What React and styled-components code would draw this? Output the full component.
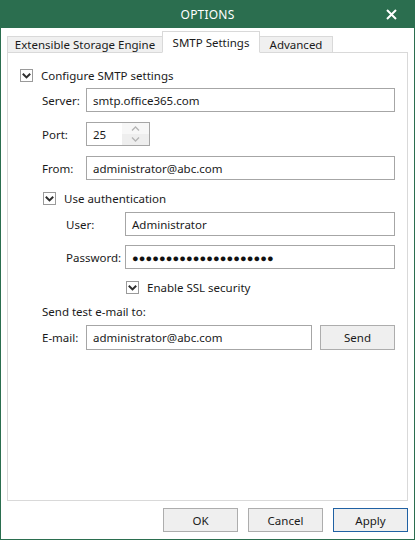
import React from 'react';
import styled, { createGlobalStyle } from 'styled-components';

const GlobalStyle = createGlobalStyle`
  html, body {
    margin: 0;
    padding: 0;
    background: #ffffff;
  }
  body {
    font-family: "Noto Sans", "Open Sans", sans-serif;
    font-size: 11.5px;
    color: #1a1a1a;
  }
`;

const green = '#2b6e4f';

const Window = styled.div`
  width: 415px;
  height: 540px;
  box-sizing: border-box;
  border: 1px solid ${green};
  border-top: none;
  display: flex;
  flex-direction: column;
  background: #ffffff;
`;

const TitleBar = styled.div`
  height: 28px;
  flex: none;
  margin: 0 -1px;
  background: ${green};
  color: #ffffff;
  display: grid;
  grid-template-columns: 1fr auto 1fr;
  align-items: center;
  font-size: 12px;
  letter-spacing: 0.2px;
`;

const Title = styled.div`
  grid-column: 2;
`;

const CloseButton = styled.div`
  grid-column: 3;
  justify-self: end;
  margin-right: 18px;
  display: flex;
  align-items: center;
`;

const Body = styled.div`
  flex: 1;
  padding: 4px 6px 0 6px;
  display: flex;
  flex-direction: column;
`;

const TabStrip = styled.div`
  display: flex;
  align-items: flex-end;
  height: 21px;
  margin-bottom: -1px;
  position: relative;
  z-index: 1;
`;

const Tab = styled.div`
  box-sizing: border-box;
  height: ${(p) => (p.$active ? '22px' : '17px')};
  margin: ${(p) => (p.$active ? '0 -1px' : '0')};
  border: 1px solid #d9d9d9;
  border-bottom: ${(p) => (p.$active ? '1px solid #ffffff' : '1px solid #d9d9d9')};
  background: ${(p) => (p.$active ? '#ffffff' : '#f0f0f0')};
  display: flex;
  align-items: center;
  justify-content: center;
  width: ${(p) => p.$width}px;
  white-space: nowrap;
  position: relative;
  z-index: ${(p) => (p.$active ? 2 : 0)};
`;

const Panel = styled.div`
  height: 449px;
  box-sizing: border-box;
  border: 1px solid #d9d9d9;
  padding: 14px 12px 0 12px;
  display: flex;
  flex-direction: column;
`;

const CheckRow = styled.label`
  display: flex;
  align-items: center;
  height: 16px;
  gap: 8px;
  margin-top: ${(p) => p.$mt || 0}px;
  margin-left: ${(p) => p.$ml || 0}px;
`;

const Box = styled.span`
  width: 13px;
  height: 13px;
  box-sizing: border-box;
  border: 1px solid #9a9a9a;
  background: #ffffff;
  display: flex;
  align-items: center;
  justify-content: center;
  flex: none;
`;

const Row = styled.div`
  display: grid;
  grid-template-columns: ${(p) => p.$label}px ${(p) => p.$input || '1fr'};
  align-items: center;
  height: ${(p) => p.$h || 24}px;
  margin-top: ${(p) => p.$mt || 0}px;
  margin-left: ${(p) => p.$ml || 0}px;
  column-gap: ${(p) => p.$gap || 0}px;
`;

const Label = styled.span`
  white-space: nowrap;
`;

const Input = styled.div`
  box-sizing: border-box;
  height: 100%;
  border: 1px solid #a6a6a6;
  background: #ffffff;
  display: flex;
  align-items: center;
  padding-left: 6px;
  overflow: hidden;
  white-space: nowrap;
`;

const Dots = styled.span`
  font-size: 11px;
  letter-spacing: 0.1px;
  color: #111;
`;

const Spinner = styled.div`
  box-sizing: border-box;
  width: 64px;
  height: 100%;
  border: 1px solid #a6a6a6;
  display: flex;
`;

const SpinValue = styled.div`
  flex: 1;
  display: flex;
  align-items: center;
  padding-left: 6px;
`;

const SpinButtons = styled.div`
  width: 27px;
  display: flex;
  flex-direction: column;
`;

const SpinButton = styled.div`
  flex: 1;
  display: flex;
  align-items: center;
  justify-content: center;
  background: ${(p) => (p.$down ? '#eeeeee' : '#f7f7f7')};
`;

const PlainText = styled.div`
  height: 16px;
  display: flex;
  align-items: center;
  margin-top: ${(p) => p.$mt || 0}px;
  margin-left: ${(p) => p.$ml || 0}px;
`;

const Button = styled.button`
  box-sizing: border-box;
  width: 75px;
  height: ${(p) => p.$h || 24}px;
  border: 1px solid ${(p) => (p.$primary ? '#2061a3' : '#adadad')};
  background: #efefef;
  font-family: inherit;
  font-size: 11.5px;
  color: #1a1a1a;
  padding: 0;
`;

const Footer = styled.div`
  display: flex;
  justify-content: flex-end;
  gap: 10px;
  margin-top: 7px;
`;

const Check = () => (
  <Box>
    <svg width="9" height="7" viewBox="0 0 9 7">
      <path d="M0.8 1.8 L4.5 5.4 L8.2 1.8" fill="none" stroke="#2e2e2e" strokeWidth="2" />
    </svg>
  </Box>
);

const Chevron = ({ up }) => (
  <svg width="9" height="5" viewBox="0 0 9 5">
    <path d={up ? 'M1 4.5 L4.5 1 L8 4.5' : 'M1 0.5 L4.5 4 L8 0.5'} fill="none" stroke="#b4b4b4" strokeWidth="1.3" />
  </svg>
);

const App = () => {
  return (
    <>
      <GlobalStyle />
      <Window>
        <TitleBar>
          <Title>OPTIONS</Title>
          <CloseButton>
            <svg width="11" height="11" viewBox="0 0 11 11">
              <path d="M1 1 L10 10 M10 1 L1 10" stroke="#ffffff" strokeWidth="2" />
            </svg>
          </CloseButton>
        </TitleBar>
        <Body>
          <TabStrip>
            <Tab $width={156}>Extensible Storage Engine</Tab>
            <Tab $width={98} $active>SMTP Settings</Tab>
            <Tab $width={74}>Advanced</Tab>
          </TabStrip>
          <Panel>
            <CheckRow>
              <Check />
              Configure SMTP settings
            </CheckRow>
            <Row $label={44} $mt={5} $ml={22}>
              <Label>Server:</Label>
              <Input>smtp.office365.com</Input>
            </Row>
            <Row $label={44} $input="64px" $mt={10} $ml={22}>
              <Label>Port:</Label>
              <Spinner>
                <SpinValue>25</SpinValue>
                <SpinButtons>
                  <SpinButton><Chevron up /></SpinButton>
                  <SpinButton $down><Chevron /></SpinButton>
                </SpinButtons>
              </Spinner>
            </Row>
            <Row $label={44} $mt={10} $ml={22}>
              <Label>From:</Label>
              <Input>administrator@abc.com</Input>
            </Row>
            <CheckRow $mt={10} $ml={23}>
              <Check />
              Use authentication
            </CheckRow>
            <Row $label={59} $mt={6} $ml={46}>
              <Label>User:</Label>
              <Input>Administrator</Input>
            </Row>
            <Row $label={59} $mt={9} $ml={46}>
              <Label>Password:</Label>
              <Input>
                <Dots>●●●●●●●●●●●●●●●●●●●●●</Dots>
              </Input>
            </Row>
            <CheckRow $mt={10} $ml={106}>
              <Check />
              Enable SSL security
            </CheckRow>
            <PlainText $mt={8} $ml={22}>Send test e-mail to:</PlainText>
            <Row $label={44} $input="226px 75px" $h={25} $mt={6} $ml={22}>
              <Label>E-mail:</Label>
              <Input>administrator@abc.com</Input>
              <Button $h={25} style={{ marginLeft: 8 }}>Send</Button>
            </Row>
          </Panel>
          <Footer>
            <Button>OK</Button>
            <Button>Cancel</Button>
            <Button $primary>Apply</Button>
          </Footer>
        </Body>
      </Window>
    </>
  );
};

export default App;
